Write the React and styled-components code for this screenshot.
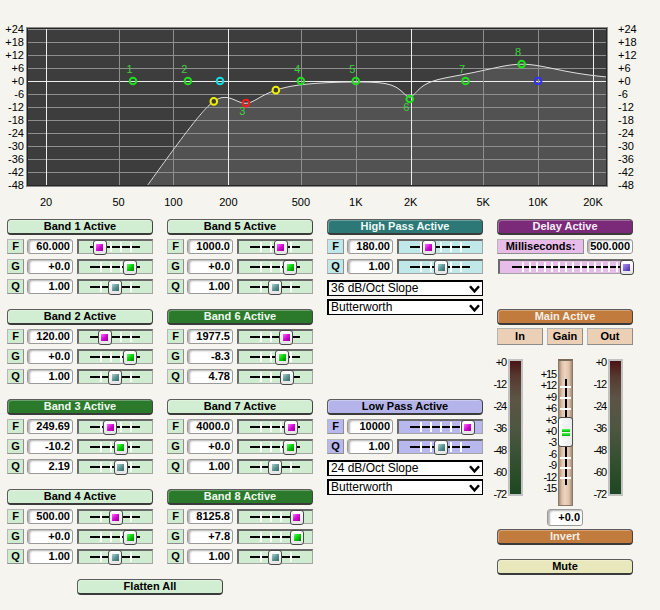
import React from "react";
import styled, { createGlobalStyle } from "styled-components";

const FONT = `"Liberation Sans", Arial, Helvetica, sans-serif`;

const GlobalStyle = createGlobalStyle`
  html, body { margin: 0; padding: 0; background: #f5f4ee; }
  *, *::before, *::after { box-sizing: border-box; }
`;

const THEMES = {
  band: { head: "#d2eed2", fg: "#000", cell: "#d0ecd0" },
  bandOn: { head: "#2b7a2b", fg: "#eef8ee", cell: "#d0ecd0" },
  hp: { head: "#2c7876", fg: "#eef8f8", cell: "#c0e8e8" },
  lp: { head: "#b4b4ea", fg: "#000", cell: "#b8b8ee" },
  delay: { head: "#7a2a78", fg: "#f6eef6", cell: "#e8bce8" },
  main: { head: "#c17b3d", fg: "#f8f0e8", cell: "#ecd0b6" },
  mute: { head: "#e8e8bc", fg: "#000", cell: "#e8e8bc" },
};

const KNOBS = {
  F: "linear-gradient(135deg, #ff70ff 0%, #d000d0 55%, #900090 100%)",
  G: "linear-gradient(135deg, #60ff60 0%, #00c800 55%, #008000 100%)",
  Q: "linear-gradient(135deg, #a8d0d0 0%, #5a9090 55%, #386868 100%)",
  D: "linear-gradient(135deg, #b090f0 0%, #7858c8 55%, #4a2c98 100%)",
};

const BANDS = [
  { n: 1, f: "60.000", fv: 60, g: "+0.0", gv: 0, q: "1.00", qv: 1, on: false },
  { n: 2, f: "120.00", fv: 120, g: "+0.0", gv: 0, q: "1.00", qv: 1, on: false },
  { n: 3, f: "249.69", fv: 249.69, g: "-10.2", gv: -10.2, q: "2.19", qv: 2.19, on: true },
  { n: 4, f: "500.00", fv: 500, g: "+0.0", gv: 0, q: "1.00", qv: 1, on: false },
  { n: 5, f: "1000.0", fv: 1000, g: "+0.0", gv: 0, q: "1.00", qv: 1, on: false },
  { n: 6, f: "1977.5", fv: 1977.5, g: "-8.3", gv: -8.3, q: "4.78", qv: 4.78, on: true },
  { n: 7, f: "4000.0", fv: 4000, g: "+0.0", gv: 0, q: "1.00", qv: 1, on: false },
  { n: 8, f: "8125.8", fv: 8125.8, g: "+7.8", gv: 7.8, q: "1.00", qv: 1, on: true },
];

/* ---------- chart maths ---------- */
const FX = (f) => 46 + 182.33 * Math.log10(f / 20);
const DY = (db) => 81 - (db * 13) / 6;
const QS = 1.4;
const EQ = BANDS.filter((b) => b.gv !== 0);
function resp(f) {
  const r = f / 180;
  const r12 = Math.pow(r, 12);
  let db = 10 * Math.log10(r12 / (1 + r12));
  for (const b of EQ) {
    const A = Math.pow(10, b.gv / 40);
    const q = b.qv / QS;
    const w = f / b.fv;
    const re = 1 - w * w;
    const num = re * re + Math.pow((w * A) / q, 2);
    const den = re * re + Math.pow(w / (A * q), 2);
    db += 10 * Math.log10(num / den);
  }
  return db;
}

const FREQS = [
  [20, "20", true],
  [50, "50", false],
  [100, "100", false],
  [200, "200", true],
  [500, "500", false],
  [1000, "1K", false],
  [2000, "2K", true],
  [5000, "5K", false],
  [10000, "10K", false],
  [20000, "20K", true],
];
const DBS = [];
for (let d = 24; d >= -48; d -= 6) DBS.push(d);
const fmtDb = (d) => (d >= 0 ? `+${d}` : `${d}`);

/* ---------- chart ---------- */
const ChartSvg = styled.svg`
  display: block;
`;
const AxisText = styled.text`
  font-family: ${FONT};
  font-size: 11px;
  fill: #000;
`;
const MarkText = styled.text`
  font-family: ${FONT};
  font-size: 11px;
  fill: #3fcf3f;
`;

function Chart() {
  const pts = [];
  for (let x = 28; x <= 606; x += 1) {
    const f = 20 * Math.pow(10, (x - 46) / 182.33);
    const y = Math.min(187, Math.max(27, DY(resp(f))));
    pts.push([x, y]);
  }
  const line = pts.map(([x, y]) => `${x},${y.toFixed(2)}`).join(" ");
  const fill = `M28,187 L${line.split(" ").join(" L")} L606,187 Z`;
  const yh1 = 249.69 / 1.5;
  const yh2 = 249.69 * 1.46;
  const marks = BANDS.map((b) => ({
    x: FX(b.fv),
    y: DY(b.gv),
    c: b.n === 3 ? "#ff1a1a" : "#1ee01e",
    label: String(b.n),
    below: b.gv < 0,
  }));
  return (
    <ChartSvg width="660" height="212" viewBox="0 0 660 212">
      <defs>
        <clipPath id="plotclip">
          <rect x="28" y="28" width="578" height="158" />
        </clipPath>
      </defs>
      <rect x="26" y="27" width="582" height="160" fill="#3d3d3d" />
      <g clipPath="url(#plotclip)">
        <path d={fill} fill="#525252" />
        {DBS.map((d) => (
          <line
            key={d}
            x1="28"
            x2="606"
            y1={DY(d) + 0.5}
            y2={DY(d) + 0.5}
            stroke={d === 0 ? "#eeeeee" : "#8e8e8e"}
            strokeWidth="1"
          />
        ))}
        {FREQS.map(([f, , bright]) => (
          <line
            key={f}
            x1={Math.round(FX(f)) + 0.5}
            x2={Math.round(FX(f)) + 0.5}
            y1="28"
            y2="186"
            stroke={bright ? "#eeeeee" : "#8e8e8e"}
            strokeWidth="1"
          />
        ))}
        <polyline points={line} fill="none" stroke="#dedede" strokeWidth="1" />
      </g>
      <rect x="26.5" y="27.5" width="581" height="159" fill="none" stroke="#8a8a8a" />
      <rect x="27.5" y="28.5" width="579" height="157" fill="none" stroke="#262626" />

      <circle cx={FX(yh1)} cy={DY(resp(yh1))} r="3.3" fill="#3a3a3a" stroke="#f0f000" strokeWidth="2" />
      <circle cx={FX(yh2)} cy={DY(resp(yh2))} r="3.3" fill="#3a3a3a" stroke="#f0f000" strokeWidth="2" />
      <circle cx={FX(180)} cy={DY(0)} r="3.3" fill="none" stroke="#10e0e8" strokeWidth="2" />
      <circle cx={FX(10000)} cy={DY(0)} r="3.3" fill="none" stroke="#3030ff" strokeWidth="2" />
      {marks.map((m) => (
        <g key={m.label}>
          <circle cx={m.x} cy={m.y} r="3.3" fill="none" stroke={m.c} strokeWidth="2" />
          <MarkText x={m.x - 3.5} y={m.below ? m.y + 12 : m.y - 8} textAnchor="middle">
            {m.label}
          </MarkText>
        </g>
      ))}

      {DBS.map((d) => (
        <AxisText key={`l${d}`} x="24" y={DY(d) + 4} textAnchor="end">
          {fmtDb(d)}
        </AxisText>
      ))}
      {DBS.map((d) => (
        <AxisText key={`r${d}`} x="618" y={DY(d) + 4} textAnchor="start">
          {fmtDb(d)}
        </AxisText>
      ))}
      {FREQS.map(([f, t]) => (
        <AxisText key={`f${f}`} x={FX(f)} y="206" textAnchor="middle">
          {t}
        </AxisText>
      ))}
    </ChartSvg>
  );
}

/* ---------- controls ---------- */
const Page = styled.div`
  width: 660px;
  height: 610px;
  overflow: hidden;
  background: #f5f4ee;
  font-family: ${FONT};
  color: #000;
`;

const Controls = styled.div`
  display: grid;
  grid-template-columns: 146px 146px 156px 136px;
  grid-template-rows: repeat(4, 75px) auto;
  column-gap: 14px;
  row-gap: 15px;
  padding: 7px 0 0 7px;
`;

const Group = styled.section`
  grid-column: ${(p) => p.$col};
  grid-row: ${(p) => p.$row};
  display: flex;
  flex-direction: column;
  gap: 5px;
  min-width: 0;
`;

const Bar = styled.div`
  flex: 0 0 auto;
  height: 16px;
  margin-bottom: ${(p) => (p.$tight ? "-1px" : "0")};
  border-radius: 4px;
  background: ${(p) => p.$bg};
  color: ${(p) => p.$fg};
  border: 1px solid #5c5c5c;
  border-bottom: 2px solid #3a3a3a;
  border-right-color: #444;
  box-shadow: inset 1px 1px 0 rgba(255, 255, 255, 0.3);
  font-size: 11px;
  font-weight: bold;
  line-height: 13px;
  text-align: center;
  white-space: nowrap;
`;

const Row = styled.div`
  display: flex;
  height: 15px;
  gap: 3px;
`;

const Tag = styled.div`
  flex: 0 0 ${(p) => (p.$w ? `${p.$w}px` : "17px")};
  height: 15px;
  background: ${(p) => p.$bg};
  border: 1px solid #8e8e8e;
  border-top-color: #b8b8b8;
  border-left-color: #b8b8b8;
  font-size: 11px;
  font-weight: bold;
  line-height: 13px;
  text-align: center;
  white-space: nowrap;
`;

const Value = styled.div`
  flex: 0 0 ${(p) => (p.$w ? `${p.$w}px` : "46px")};
  height: ${(p) => (p.$h ? `${p.$h}px` : "15px")};
  background: #fff;
  border: 1px solid #9a9a9a;
  border-radius: 3px;
  box-shadow: inset 3px 2px 2px -1px rgba(0, 0, 0, 0.3);
  font-size: 11px;
  font-weight: bold;
  line-height: ${(p) => (p.$h ? `${p.$h - 2}px` : "13px")};
  text-align: right;
  padding-right: 2px;
  white-space: nowrap;
`;

const SliderBox = styled.div`
  position: relative;
  flex: 1 1 auto;
  height: 15px;
  margin-left: 1px;
  background: ${(p) => p.$bg};
  border: 1px solid #a4a4a4;
  border-top: 2px solid #6a6a6a;
  border-left: 2px solid #6a6a6a;
`;

const TrackLine = styled.div`
  position: absolute;
  top: 5px;
  left: ${(p) => p.$x}px;
  width: ${(p) => p.$len}px;
  height: 2px;
  background: #000;
`;

const Tick = styled.div`
  position: absolute;
  top: 1px;
  bottom: 1px;
  left: ${(p) => p.$x}px;
  width: 2px;
  margin-left: -1px;
  background: #fff;
`;

const Thumb = styled.div`
  position: absolute;
  top: -1px;
  width: 14px;
  height: 15px;
  margin-left: -7px;
  display: flex;
  align-items: center;
  justify-content: center;
  background: linear-gradient(#ffffff, #e4e4e4);
  border: 1px solid #484848;
  border-radius: 3px;
`;

const Knob = styled.div`
  width: 7px;
  height: 7px;
  background: ${(p) => p.$c};
`;

const BAND_TRACK = { x: 11, len: 50, ticks: [21.5, 31.5, 41.5, 51.5] };
const PASS_TRACK = { x: 11, len: 60, ticks: [22, 32, 42, 52, 62] };
const DELAY_TRACK = {
  x: 12,
  len: 111,
  ticks: Array.from({ length: 14 }, (_, i) => 23 + i * 7.2),
};

function Slider({ bg, track, pos, knob }) {
  return (
    <SliderBox $bg={bg}>
      <TrackLine $x={track.x} $len={track.len} />
      {track.ticks.map((t) => (
        <Tick key={t} $x={t} />
      ))}
      <Thumb style={{ left: pos }}>
        <Knob $c={knob} />
      </Thumb>
    </SliderBox>
  );
}

function ParamRow({ label, value, theme, track, pos }) {
  return (
    <Row>
      <Tag $bg={theme.cell}>{label}</Tag>
      <Value>{value}</Value>
      <Slider bg={theme.cell} track={track} pos={pos} knob={KNOBS[label]} />
    </Row>
  );
}

const fPos = (f) => 22.7 + 17.35 * (Math.log10(f) - Math.log10(60)) - 2;
const gPos = (g) => 53 + g * 0.93 - 2;
const qPos = (q) => 38 + 17 * Math.log10(q) - 2;

function Band({ b }) {
  const theme = b.on ? THEMES.bandOn : THEMES.band;
  return (
    <Group $col={b.n <= 4 ? 1 : 2} $row={((b.n - 1) % 4) + 1}>
      <Bar $bg={theme.head} $fg={theme.fg} $tight>
        Band {b.n} Active
      </Bar>
      <ParamRow label="F" value={b.f} theme={theme} track={BAND_TRACK} pos={fPos(b.fv)} />
      <ParamRow label="G" value={b.g} theme={theme} track={BAND_TRACK} pos={gPos(b.gv)} />
      <ParamRow label="Q" value={b.q} theme={theme} track={BAND_TRACK} pos={qPos(b.qv)} />
    </Group>
  );
}

const DropStack = styled.div`
  display: flex;
  flex-direction: column;
  gap: 3px;
  margin-top: 1px;
`;

const Dropdown = styled.div`
  display: flex;
  align-items: center;
  height: 16px;
  background: #fff;
  border: 1px solid #000;
  border-top-width: 2px;
  border-left-width: 2px;
  padding-left: 2px;
  font-size: 12px;
  line-height: 13px;
  white-space: nowrap;
`;

const Chevron = styled.span`
  margin-left: auto;
  width: 15px;
  height: 13px;
  display: flex;
  align-items: center;
  justify-content: center;
`;

function Select({ children }) {
  return (
    <Dropdown>
      {children}
      <Chevron>
        <svg width="11" height="8" viewBox="0 0 11 8">
          <path d="M1 1.2 L5.5 6.4 L10 1.2" fill="none" stroke="#000" strokeWidth="2.4" />
        </svg>
      </Chevron>
    </Dropdown>
  );
}

function Pass({ row, title, theme, f, fp, q, qp, slope }) {
  return (
    <Group $col={3} $row={`${row} / span 2`}>
      <Bar $bg={theme.head} $fg={theme.fg} $tight>
        {title}
      </Bar>
      <ParamRow label="F" value={f} theme={theme} track={PASS_TRACK} pos={fp} />
      <ParamRow label="Q" value={q} theme={theme} track={PASS_TRACK} pos={qp} />
      <DropStack>
        <Select>{slope}</Select>
        <Select>Butterworth</Select>
      </DropStack>
    </Group>
  );
}

/* main section */
const MainGroup = styled.section`
  grid-column: 4;
  grid-row: 2 / span 4;
  display: flex;
  flex-direction: column;
`;

const IogRow = styled.div`
  display: flex;
  gap: 4px;
  margin-top: 3px;
`;

const IogBtn = styled.div`
  flex: 0 0 ${(p) => p.$w}px;
  height: 17px;
  background: #ecd0b6;
  border: 1px solid #8c8c8c;
  border-top-color: #b4b4b4;
  border-left-color: #b4b4b4;
  font-size: 11px;
  font-weight: bold;
  line-height: 15px;
  text-align: center;
`;

const MeterSection = styled.div`
  display: flex;
  align-items: flex-start;
  height: 150px;
  margin-top: 11px;
`;

const Scale = styled.div`
  flex: 0 0 ${(p) => p.$w}px;
  width: ${(p) => p.$w}px;
  min-width: 0;
  height: ${(p) => p.$h}px;
  margin-top: ${(p) => p.$top}px;
  margin-right: 2px;
  display: flex;
  flex-direction: column;
  justify-content: space-between;
  align-items: flex-end;
  font-size: 11px;
  line-height: ${(p) => p.$lh}px;
  letter-spacing: -1.1px;
  white-space: nowrap;
`;

const ScaleLabel = styled.span`
  flex: 0 0 auto;
`;

const Meter = styled.div`
  flex: 0 0 15px;
  height: 137px;
  margin-top: 3px;
  border: 2px solid #c2c2c2;
  background: linear-gradient(
    to bottom,
    #4a1414 0%,
    #573a30 12%,
    #5c5446 28%,
    #4e5642 50%,
    #34502f 75%,
    #1d4722 100%
  );
`;

const GainTrack = styled.div`
  position: relative;
  flex: 0 0 15px;
  height: 147px;
  margin-top: 3px;
  border: 1px solid #8a7868;
  border-top: 2px solid #7a6a5a;
  background: linear-gradient(
    to right,
    #a08c7c 0px,
    #e0c2a8 3px,
    #eed4be 6px,
    #e0c2a8 10px,
    #a08c7c 13px
  );
`;

const GainLine = styled.div`
  position: absolute;
  left: 5.5px;
  top: 18px;
  width: 2px;
  height: 106px;
  background: #000;
`;

const GainTick = styled.div`
  position: absolute;
  left: 1px;
  top: ${(p) => p.$y}px;
  width: 11px;
  height: 2px;
  background: #fff;
`;

const GainThumb = styled.div`
  position: absolute;
  left: -1px;
  top: 56px;
  width: 15px;
  height: 30px;
  display: flex;
  flex-direction: column;
  align-items: center;
  justify-content: center;
  gap: 1px;
  background: linear-gradient(to right, #ffffff, #ececec);
  border: 1px solid #4c4c4c;
  border-radius: 3px;
`;

const GainBar = styled.div`
  width: 8px;
  height: 3px;
  background: linear-gradient(#50ff50, #00b000);
`;

const GainValue = styled(Value)`
  flex: 0 0 auto;
  width: 36px;
  align-self: center;
  margin-top: 3px;
`;

const WideBar = styled(Bar)`
  margin-top: ${(p) => p.$mt}px;
`;

const FlattenBar = styled(Bar)`
  grid-column: 1 / span 2;
  grid-row: 5;
  width: 146px;
  margin-left: 70px;
`;

const METER_LABELS = ["+0", "-12", "-24", "-36", "-48", "-60", "-72"];
const GAIN_LABELS = ["+15", "+12", "+9", "+6", "+3", "+0", "-3", "-6", "-9", "-12", "-15"];

function MainPanel() {
  return (
    <MainGroup>
      <Bar $bg={THEMES.main.head} $fg={THEMES.main.fg}>
        Main Active
      </Bar>
      <IogRow>
        <IogBtn $w={46}>In</IogBtn>
        <IogBtn $w={36}>Gain</IogBtn>
        <IogBtn $w={46}>Out</IogBtn>
      </IogRow>
      <MeterSection>
        <Scale $w={9} $h={144} $top={0} $lh={12}>
          {METER_LABELS.map((l) => (
            <ScaleLabel key={l}>{l}</ScaleLabel>
          ))}
        </Scale>
        <Meter />
        <Scale $w={33} $h={125} $top={13} $lh={11}>
          {GAIN_LABELS.map((l) => (
            <ScaleLabel key={l}>{l}</ScaleLabel>
          ))}
        </Scale>
        <GainTrack>
          <GainLine />
          {[25, 36, 47, 96, 106, 116].map((y) => (
            <GainTick key={y} $y={y} />
          ))}
          <GainThumb>
            <GainBar />
            <GainBar />
          </GainThumb>
        </GainTrack>
        <Scale $w={33} $h={144} $top={0} $lh={12}>
          {METER_LABELS.map((l) => (
            <ScaleLabel key={l}>{l}</ScaleLabel>
          ))}
        </Scale>
        <Meter />
      </MeterSection>
      <GainValue $h={17}>+0.0</GainValue>
      <WideBar $bg={THEMES.main.head} $fg={THEMES.main.fg} $mt={3}>
        Invert
      </WideBar>
      <WideBar $bg={THEMES.mute.head} $fg={THEMES.mute.fg} $mt={14}>
        Mute
      </WideBar>
    </MainGroup>
  );
}

function DelayPanel() {
  const t = THEMES.delay;
  return (
    <Group $col={4} $row={1}>
      <Bar $bg={t.head} $fg={t.fg} $tight>
        Delay Active
      </Bar>
      <Row>
        <Tag $bg={t.cell} $w={87}>
          Milliseconds:
        </Tag>
        <Value>500.000</Value>
      </Row>
      <Row>
        <Slider bg={t.cell} track={DELAY_TRACK} pos={126.5} knob={KNOBS.D} />
      </Row>
    </Group>
  );
}

export default function App() {
  return (
    <Page>
      <GlobalStyle />
      <Chart />
      <Controls>
        {BANDS.map((b) => (
          <Band key={b.n} b={b} />
        ))}
        <Pass
          row={1}
          title="High Pass Active"
          theme={THEMES.hp}
          f="180.00"
          fp={29.7}
          q="1.00"
          qp={42.3}
          slope="36 dB/Oct Slope"
        />
        <Pass
          row={3}
          title="Low Pass Active"
          theme={THEMES.lp}
          f="10000"
          fp={68.7}
          q="1.00"
          qp={42.3}
          slope="24 dB/Oct Slope"
        />
        <DelayPanel />
        <MainPanel />
        <FlattenBar $bg={THEMES.band.head} $fg="#000">
          Flatten All
        </FlattenBar>
      </Controls>
    </Page>
  );
}
